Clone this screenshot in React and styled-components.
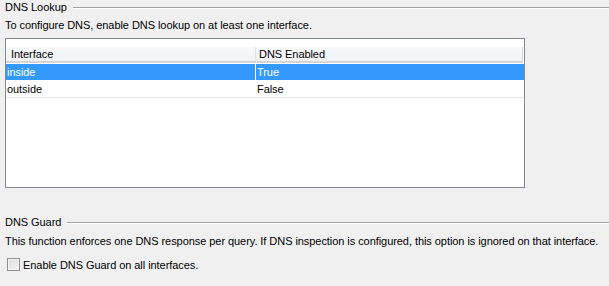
import React from "react";
import styled, { createGlobalStyle } from "styled-components";

const Global = createGlobalStyle`
  html, body { margin: 0; padding: 0; background: #f0f0f0; }
  body { font-family: "Liberation Sans", Arial, sans-serif; font-size: 11px; letter-spacing: -0.06px; color: #000; }
`;

const Page = styled.div`
  width: 609px;
  height: 286px;
  box-sizing: border-box;
  padding: 0 0 0 5px;
  display: flex;
  flex-direction: column;
  overflow: hidden;
`;

const GroupHeader = styled.div`
  display: flex;
  align-items: center;
  height: 14px;
  margin-top: ${(p) => p.$top || 0}px;
`;

const GroupTitle = styled.span`
  white-space: nowrap;
  margin-right: 6px;
`;

const Rule = styled.div`
  flex: 1;
  height: 0;
  border-top: 1px solid #a0a0a0;
  border-bottom: 1px solid #ffffff;
  margin-top: 1px;
`;

const Desc = styled.div`
  height: 15px;
  line-height: 15px;
  margin-top: ${(p) => p.$top || 0}px;
  white-space: nowrap;
`;

const Table = styled.div`
  margin-top: 5px;
  width: 520px;
  height: 150px;
  box-sizing: border-box;
  border: 1px solid #828790;
  background: #fff;
  padding-top: 8px;
`;

const HeaderRow = styled.div`
  display: grid;
  grid-template-columns: 250px 267px;
  height: 14px;
  background: linear-gradient(#f7f8fa, #f1f2f4);
  border-bottom: 2px solid #d5d5d5;
  margin-right: 1px;
`;

const HeaderCell = styled.div`
  line-height: 14px;
  padding-left: ${(p) => (p.$first ? 5 : 3)}px;
  border-right: 1px solid ${(p) => (p.$first ? "#e3e3e3" : "#d5d5d5")};
`;

const Row = styled.div`
  display: grid;
  grid-template-columns: 250px 267px;
  height: 16px;
  margin-top: ${(p) => (p.$first ? 1 : 0)}px;
  background: ${(p) => (p.$sel ? "#3399ff" : "#fff")};
  color: ${(p) => (p.$sel ? "#fff" : "#000")};
  border-bottom: 1px solid ${(p) => (p.$sel ? "#fff" : "#e8e8e8")};
`;

const Cell = styled.div`
  line-height: 16px;
  padding-left: 1px;
  border-right: ${(p) => (p.$first ? "1px solid #fff" : "none")};
`;

const CheckRow = styled.label`
  display: flex;
  align-items: center;
  margin-top: 9px;
  margin-left: 2px;
`;

const Box = styled.span`
  width: 11px;
  height: 11px;
  border: 1px solid #8e8f8f;
  background: linear-gradient(135deg, #dcdcdc, #f6f6f6);
  box-shadow: inset 0 0 0 1px #f4f4f4;
  margin-right: 3px;
`;

export default function App() {
  return (
    <>
      <Global />
      <Page>
        <GroupHeader>
          <GroupTitle>DNS Lookup</GroupTitle>
          <Rule />
        </GroupHeader>
        <Desc $top={4}>To configure DNS, enable DNS lookup on at least one interface.</Desc>
        <Table>
          <HeaderRow>
            <HeaderCell $first>Interface</HeaderCell>
            <HeaderCell>DNS Enabled</HeaderCell>
          </HeaderRow>
          <Row $first $sel>
            <Cell $first>inside</Cell>
            <Cell>True</Cell>
          </Row>
          <Row>
            <Cell $first>outside</Cell>
            <Cell>False</Cell>
          </Row>
        </Table>
        <GroupHeader $top={27}>
          <GroupTitle>DNS Guard</GroupTitle>
          <Rule />
        </GroupHeader>
        <Desc $top={5}>
          This function enforces one DNS response per query. If DNS inspection is configured, this option is ignored on that interface.
        </Desc>
        <CheckRow>
          <Box />
          <span>Enable DNS Guard on all interfaces.</span>
        </CheckRow>
      </Page>
    </>
  );
}
